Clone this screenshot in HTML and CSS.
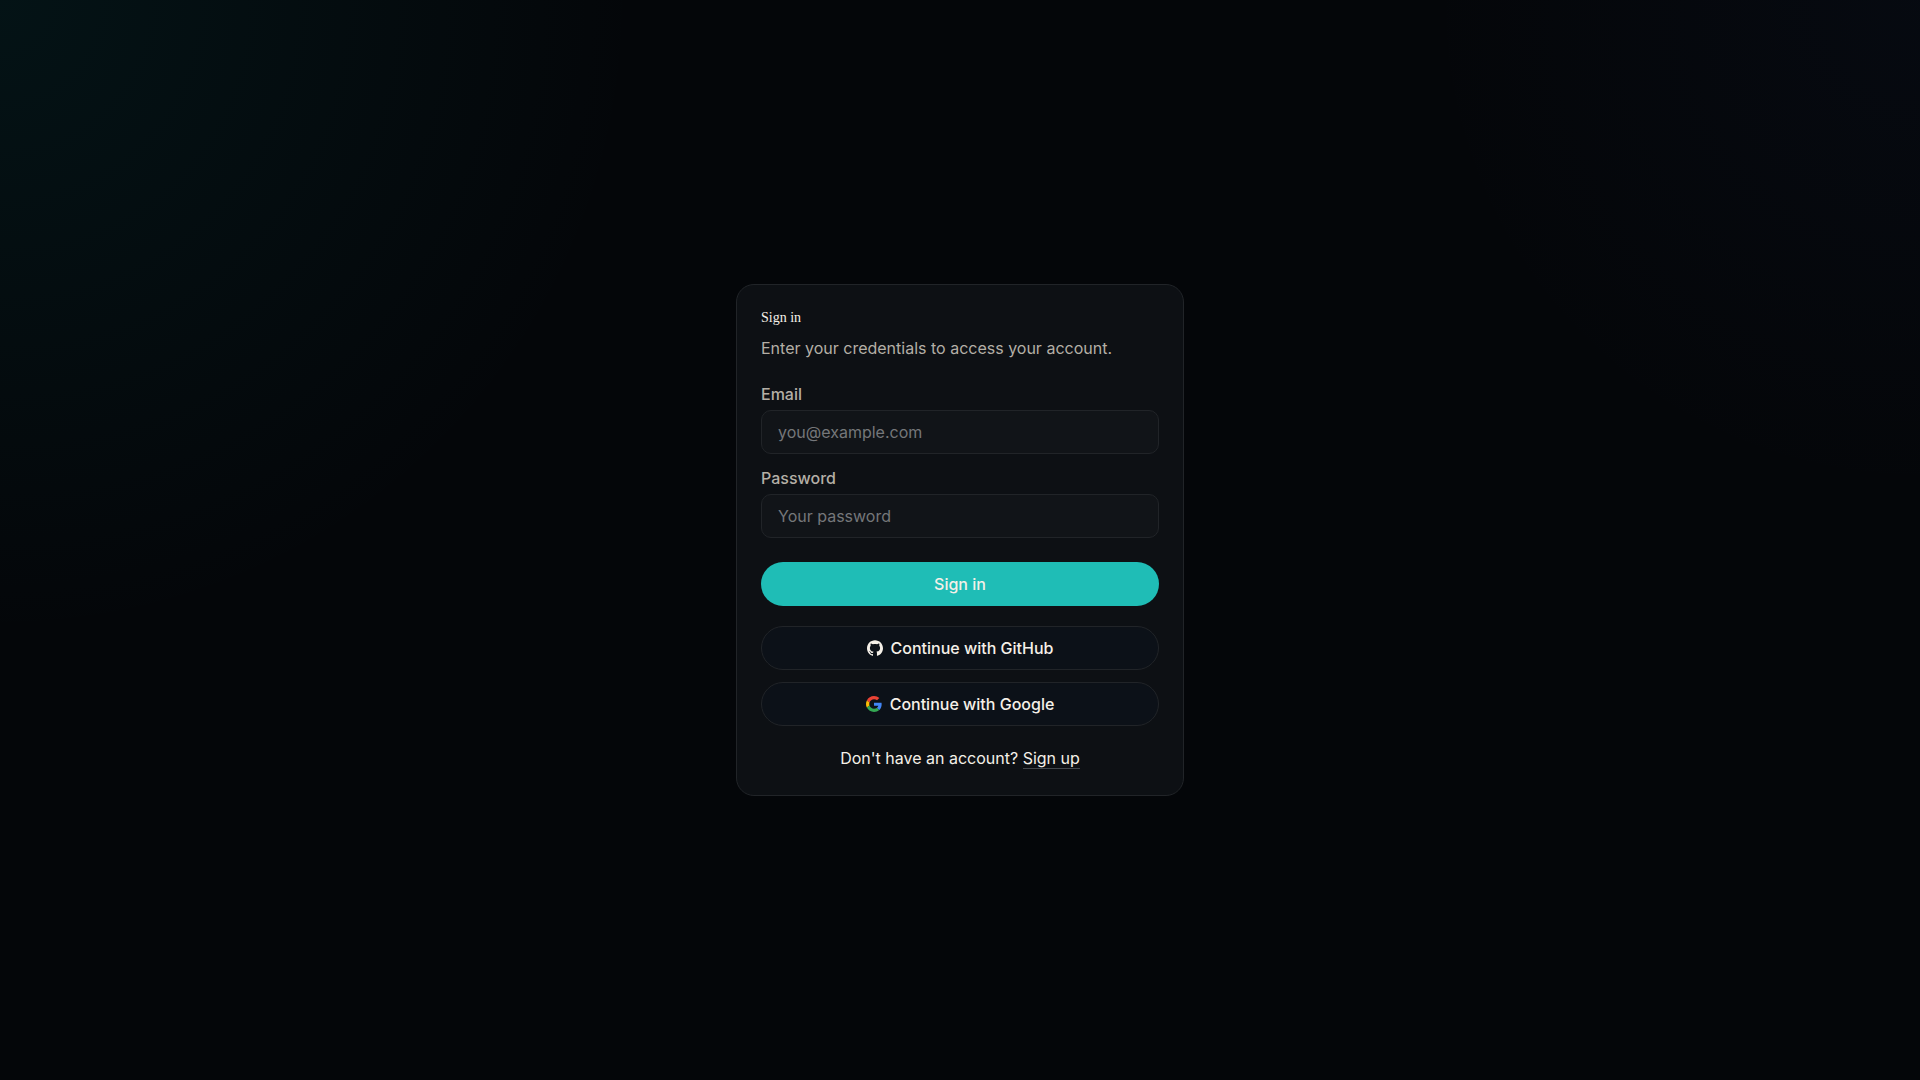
FILE: index.html
```html
<!DOCTYPE html>
<html lang="en">
<head>
  <meta charset="UTF-8" />
  <meta name="viewport" content="width=device-width, initial-scale=1" />
  <title>Sign in</title>
  <link rel="stylesheet" href="styles.css">
</head>
<body>

<main class="card">
  <header class="card-header">
    <h1>Sign in</h1>
    <p>Enter your credentials to access your account.</p>
  </header>

  <form class="login-form">
    <div class="field">
      <label for="email">Email</label>
      <input type="email" id="email" name="email" placeholder="you@example.com" required />
    </div>
    <div class="field">
      <label for="password">Password</label>
      <input type="password" id="password" name="password" placeholder="Your password" required />
    </div>
    <button type="submit" class="btn btn-primary">Sign in</button>
  </form>

  <div class="providers">
    <button type="button" class="btn btn-outline">
      <svg viewBox="0 0 24 24" aria-hidden="true">
        <path fill="currentColor" d="M12 .297c-6.63 0-12 5.373-12 12 0 5.303 3.438 9.8 8.205 11.385.6.113.82-.258.82-.577 0-.285-.01-1.04-.015-2.04-3.338.724-4.042-1.61-4.042-1.61C4.422 18.07 3.633 17.7 3.633 17.7c-1.087-.744.084-.729.084-.729 1.205.084 1.838 1.236 1.838 1.236 1.07 1.835 2.809 1.305 3.495.998.108-.776.417-1.305.76-1.605-2.665-.3-5.466-1.332-5.466-5.93 0-1.31.465-2.38 1.235-3.22-.135-.303-.54-1.523.105-3.176 0 0 1.005-.322 3.3 1.23.96-.267 1.98-.399 3-.405 1.02.006 2.04.138 3 .405 2.28-1.552 3.285-1.23 3.285-1.23.645 1.653.24 2.873.12 3.176.765.84 1.23 1.91 1.23 3.22 0 4.61-2.805 5.625-5.475 5.92.42.36.81 1.096.81 2.22 0 1.606-.015 2.896-.015 3.286 0 .315.21.69.825.57C20.565 22.092 24 17.592 24 12.297c0-6.627-5.373-12-12-12"/>
      </svg>
      Continue with GitHub
    </button>
    <button type="button" class="btn btn-outline">
      <svg viewBox="0 0 48 48" aria-hidden="true">
        <path fill="#EA4335" d="M24 9.5c3.54 0 6.71 1.22 9.21 3.6l6.85-6.85C35.9 2.38 30.47 0 24 0 14.62 0 6.51 5.38 2.56 13.22l7.98 6.19C12.43 13.72 17.74 9.5 24 9.5z"/>
        <path fill="#4285F4" d="M46.98 24.55c0-1.57-.15-3.09-.38-4.55H24v9.02h12.94c-.58 2.96-2.26 5.48-4.78 7.18l7.73 6c4.51-4.18 7.09-10.36 7.09-17.65z"/>
        <path fill="#FBBC05" d="M10.53 28.59c-.48-1.45-.76-2.99-.76-4.59s.27-3.14.76-4.59l-7.98-6.19C.92 16.46 0 20.12 0 24c0 3.88.92 7.54 2.56 10.78l7.97-6.19z"/>
        <path fill="#34A853" d="M24 48c6.48 0 11.93-2.13 15.89-5.81l-7.73-6c-2.15 1.45-4.92 2.3-8.16 2.3-6.26 0-11.57-4.22-13.47-9.91l-7.98 6.19C6.51 42.62 14.62 48 24 48z"/>
      </svg>
      Continue with Google
    </button>
  </div>

  <p class="signup">Don't have an account? <a href="#">Sign up</a></p>
</main>

</body>
</html>
```
FILE: styles.css
```css
* {
  box-sizing: border-box;
}
body {
  margin: 0;
  min-height: 100vh;
  display: flex;
  align-items: center;
  justify-content: center;
  padding: 24px;
  font-family: Inter, sans-serif;
  font-size: 16px;
  line-height: 24px;
  color: #f5f0e8;
  background:
    radial-gradient(circle at 0 0, rgba(0, 190, 190, 0.07), transparent 640px),
    radial-gradient(circle at 100% 0, rgba(60, 100, 200, 0.04), transparent 500px),
    #040609;
}
h1, p {
  margin: 0;
}
.card {
  width: 100%;
  max-width: 448px;
  padding: 24px;
  background: #0d1014;
  border: 1px solid #212428;
  border-radius: 18px;
}
.card-header {
  display: flex;
  flex-direction: column;
  gap: 10px;
  margin-bottom: 22px;
}
.card-header h1 {
  font-family: "Liberation Serif", serif;
  font-size: 14px;
  font-weight: 400;
  line-height: 17px;
}
.card-header p {
  color: #b4afa6;
}
.login-form {
  display: flex;
  flex-direction: column;
  gap: 12px;
}
.field {
  display: flex;
  flex-direction: column;
  gap: 4px;
}
.field label {
  font-weight: 500;
  color: #b4afa6;
}
.field input {
  width: 100%;
  height: 44px;
  padding: 0 16px;
  font: inherit;
  color: #f5f0e8;
  background: #111418;
  border: 1px solid #212428;
  border-radius: 10px;
}
.field input::placeholder {
  color: #75777a;
}
.field input:focus {
  outline: none;
  border-color: #1fbdb6;
}
.btn {
  display: flex;
  align-items: center;
  justify-content: center;
  gap: 8px;
  width: 100%;
  height: 44px;
  font: inherit;
  font-weight: 500;
  color: #f5f0e8;
  border: 0;
  border-radius: 22px;
  cursor: pointer;
}
.btn svg {
  width: 16px;
  height: 16px;
}
.btn-primary {
  margin-top: 12px;
  background: #1fbdb6;
}
.btn-outline {
  background: #0c1118;
  border: 1px solid #212428;
}
.providers {
  display: flex;
  flex-direction: column;
  gap: 12px;
  margin: 20px 0;
}
.signup {
  line-height: 25px;
  text-align: center;
}
.signup a {
  color: inherit;
  text-decoration: none;
  border-bottom: 1px solid #43474c;
}
```
